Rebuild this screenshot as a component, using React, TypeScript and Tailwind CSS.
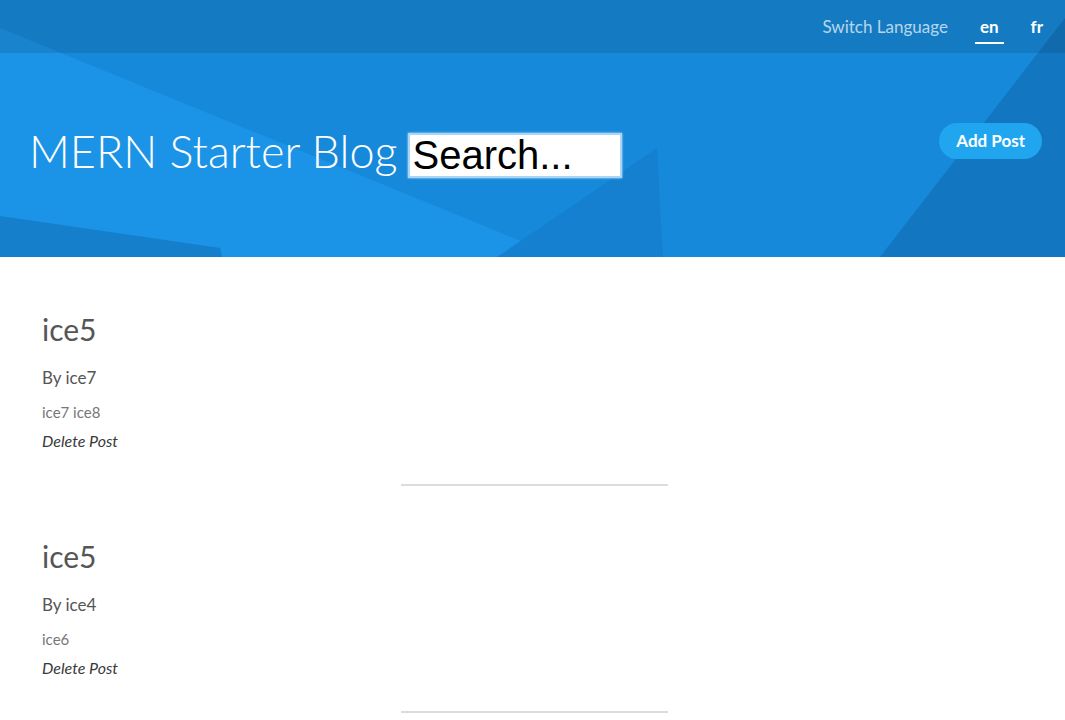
const posts = [
  { id: 1, title: "ice5", author: "ice7", tags: "ice7 ice8" },
  { id: 2, title: "ice5", author: "ice4", tags: "ice6" },
];

function HeaderBackground() {
  return (
    <svg
      className="absolute inset-0 h-full w-full"
      viewBox="0 0 1065 257"
      preserveAspectRatio="none"
      aria-hidden
    >
      <rect width="1065" height="257" fill="#1b93e6" />
      <polygon points="0,28 0,0 1065,0 1065,257 560,257" fill="#1789da" />
      <polygon points="657,148 497,257 663,257" fill="#1580d0" />
      <polygon points="0,216 220,248 222,257 0,257" fill="#157fcc" />
      <polygon points="1065,18 1065,257 880,257" fill="#1276c0" />
    </svg>
  );
}

function Post({ title, author, tags }: { title: string; author: string; tags: string }) {
  return (
    <article className="pt-[30px]">
      <h3 className="text-[30px] leading-[36px] text-[#555]">{title}</h3>
      <p className="mt-[20px] text-[17px] leading-[22px] text-[#555]">By {author}</p>
      <p className="mt-[14px] text-[15px] leading-[18px] text-[#777]">{tags}</p>
      <p className="mt-[11px] text-[16px] italic leading-[18px] text-[#3a3a3a]">Delete Post</p>
      <hr className="mx-auto mt-[34px] mb-[22px] w-[267px] border-t-2 border-[#dcdcdc]" />
    </article>
  );
}

export default function App() {
  return (
    <div className="min-h-screen bg-white font-['Lato','Open_Sans',sans-serif]">
      <header className="relative h-[257px] overflow-hidden">
        <HeaderBackground />
        <div className="relative flex h-[53px] items-center justify-end bg-black/10 pr-[22px]">
          <span className="text-[17px] text-white/70">Switch Language</span>
          <span className="ml-[27px] border-b-2 border-white px-[5px] pb-[3px] pt-[5px] text-[17px] font-bold text-white">
            en
          </span>
          <span className="ml-[27px] text-[17px] font-bold text-white">fr</span>
        </div>
        <div className="relative flex items-start justify-between px-[29px] pr-[23px]">
          <div className="mt-[70px] flex items-center">
            <h1 className="text-[45px] font-light leading-[56px] text-white">MERN Starter Blog</h1>
            <input
              className="ml-[11px] mt-[8px] h-[45px] w-[214px] border-2 border-[#a9d6f8] bg-white px-[2px] font-['Liberation_Sans',Arial,sans-serif] text-[40px] text-black shadow-[0_0_2px_#cfe8fb] placeholder:text-black outline-none"
              placeholder="Search..."
            />
          </div>
          <button className="mt-[70px] h-[36px] rounded-full bg-[#1fa6ef] px-[17px] text-[17px] font-bold text-white">
            Add Post
          </button>
        </div>
      </header>
      <main className="pl-[42px] pr-[38px] pt-[24px]">
        {posts.map((p) => (
          <Post key={p.id} title={p.title} author={p.author} tags={p.tags} />
        ))}
      </main>
    </div>
  );
}
